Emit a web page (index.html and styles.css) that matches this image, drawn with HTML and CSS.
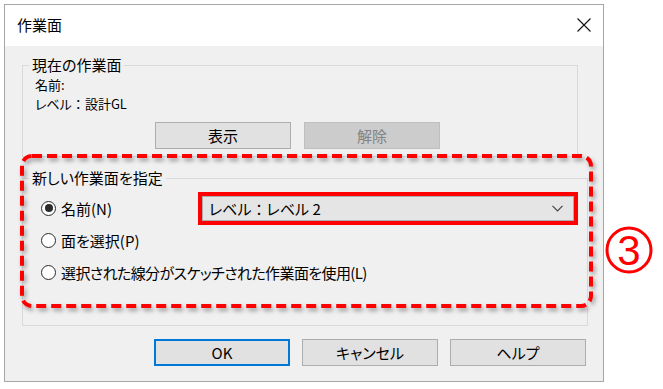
FILE: index.html
```html
<!DOCTYPE html>
<html lang="ja">
  <head>
    <meta charset="UTF-8" />
    <title>作業面</title>
    <link rel="stylesheet" href="styles.css">
  </head>
  <body>
    <div class="stage">
      <div class="window">
        <div class="titlebar">
          <span class="title">作業面</span>
          <svg class="close" width="14" height="14" viewBox="0 0 14 14">
            <path d="M0.5 0.5 L13.5 13.5 M13.5 0.5 L0.5 13.5" stroke="#111" stroke-width="1.1" fill="none" />
          </svg>
        </div>

        <div class="content">
          <fieldset class="group current">
            <legend>現在の作業面</legend>
            <div class="line">名前:</div>
            <div class="line">レベル<span class="wide">：</span>設計GL</div>
            <div class="btn-row">
              <button class="btn">表示</button>
              <button class="btn" disabled>解除</button>
            </div>
          </fieldset>

          <fieldset class="group pick">
            <legend>新しい作業面を指定</legend>
            <div class="opt">
              <label class="radio-label"><span class="radio checked"></span>名前(N)</label>
              <div class="combo">
                <span>レベル<span class="wide">：</span>レベル 2</span>
                <svg width="11" height="7" viewBox="0 0 11 7">
                  <path d="M0.5 0.8 L5.5 5.8 L10.5 0.8" stroke="#444" stroke-width="1.2" fill="none" />
                </svg>
              </div>
            </div>
            <div class="opt">
              <label class="radio-label"><span class="radio"></span>面を選択(P)</label>
            </div>
            <div class="opt">
              <label class="radio-label tight"><span class="radio"></span>選択された線分がスケッチされた作業面を使用(L)</label>
            </div>
          </fieldset>

          <div class="footer">
            <button class="btn default">OK</button>
            <button class="btn">キャンセル</button>
            <button class="btn">ヘルプ</button>
          </div>
        </div>
      </div>

      <!-- annotation drawn over the dialog -->
      <svg class="mark" width="663" height="389" viewBox="0 0 663 389">
        <rect x="22" y="156" width="569" height="150" rx="10" ry="10"
              fill="none" stroke="#ff0000" stroke-width="4" stroke-dasharray="10 5" />
      </svg>
      <svg class="step" width="52" height="52" viewBox="0 0 52 52">
        <circle cx="26" cy="26" r="22" fill="none" stroke="#ff0000" stroke-width="3" />
        <text x="26" y="41" text-anchor="middle">3</text>
      </svg>
    </div>
  </body>
</html>
```

FILE: styles.css
```css
* {
  box-sizing: border-box;
}
body {
  margin: 0;
  background: #ffffff;
  font-family: "Noto Sans CJK JP", "Liberation Sans", sans-serif;
  font-size: 15px;
  font-feature-settings: "palt";
  color: #000;
}
.stage {
  position: relative;
  width: 663px;
  height: 389px;
  padding: 4px 0 0 4px;
}
.window {
  width: 600px;
  height: 378px;
  border: 1px solid #a6a6a6;
  display: flex;
  flex-direction: column;
}
.titlebar {
  height: 41px;
  background: #ffffff;
  display: flex;
  align-items: center;
  justify-content: space-between;
  padding: 0 12px 2px 12px;
}
.content {
  flex: 1;
  background: #f0f0f0;
  padding: 9px 15px 0 17px;
}
.group {
  margin: 0;
  border: 1px solid #d9d9d9;
  min-width: 0;
}
.group legend {
  padding: 0 3px;
  margin-left: -6px;
  line-height: 20px;
}
.wide {
  font-feature-settings: normal;
}
.current {
  width: 556px;
  height: 102px;
  padding: 0 0 0 12px;
}
.line {
  font-size: 13px;
  line-height: 19px;
  height: 19px;
}
.btn-row {
  display: flex;
  gap: 13px;
  padding-left: 120px;
  margin-top: 9px;
}
.btn {
  width: 136px;
  height: 27px;
  background: #e1e1e1;
  border: 1px solid #adadad;
  font-family: inherit;
  font-size: 15px;
  font-feature-settings: "palt";
  color: #000;
  padding: 0;
  line-height: 24px;
}
.btn:disabled {
  background: #cccccc;
  border-color: #bfbfbf;
  color: #838383;
}
.btn.default {
  border: 2px solid #0078d7;
}
.pick {
  width: 566px;
  height: 158px;
  margin-top: 11px;
  padding: 4px 0 0 18px;
}
.pick legend {
  margin-left: -12px;
}
.opt {
  height: 32px;
  display: flex;
  align-items: center;
}
.radio-label {
  display: flex;
  align-items: center;
  gap: 5px;
  width: 161px;
  white-space: nowrap;
}
.radio-label.tight {
  letter-spacing: -0.6px;
}
.radio {
  width: 15px;
  height: 15px;
  border: 1.5px solid #2b2b2b;
  border-radius: 50%;
  background: #fff;
  display: flex;
  align-items: center;
  justify-content: center;
  flex-shrink: 0;
}
.radio.checked::after {
  content: "";
  width: 8px;
  height: 8px;
  border-radius: 50%;
  background: #2b2b2b;
}
.combo {
  width: 372px;
  height: 25px;
  background: #e5e5e5;
  border: 1px solid #adadad;
  outline: 4px solid #ff0000;
  display: flex;
  align-items: center;
  justify-content: space-between;
  padding: 0 10px 0 6px;
}
.footer {
  display: flex;
  justify-content: flex-end;
  gap: 12px;
  margin-top: 13px;
  margin-right: 2px;
}
.mark {
  position: absolute;
  left: 0;
  top: 0;
  filter: drop-shadow(2px 3px 2px rgba(0, 0, 0, 0.35));
  pointer-events: none;
}
.step {
  position: absolute;
  left: 603px;
  top: 224px;
}
.step text {
  font-family: "Liberation Sans", sans-serif;
  font-size: 42px;
  fill: #ff0000;
}
```
